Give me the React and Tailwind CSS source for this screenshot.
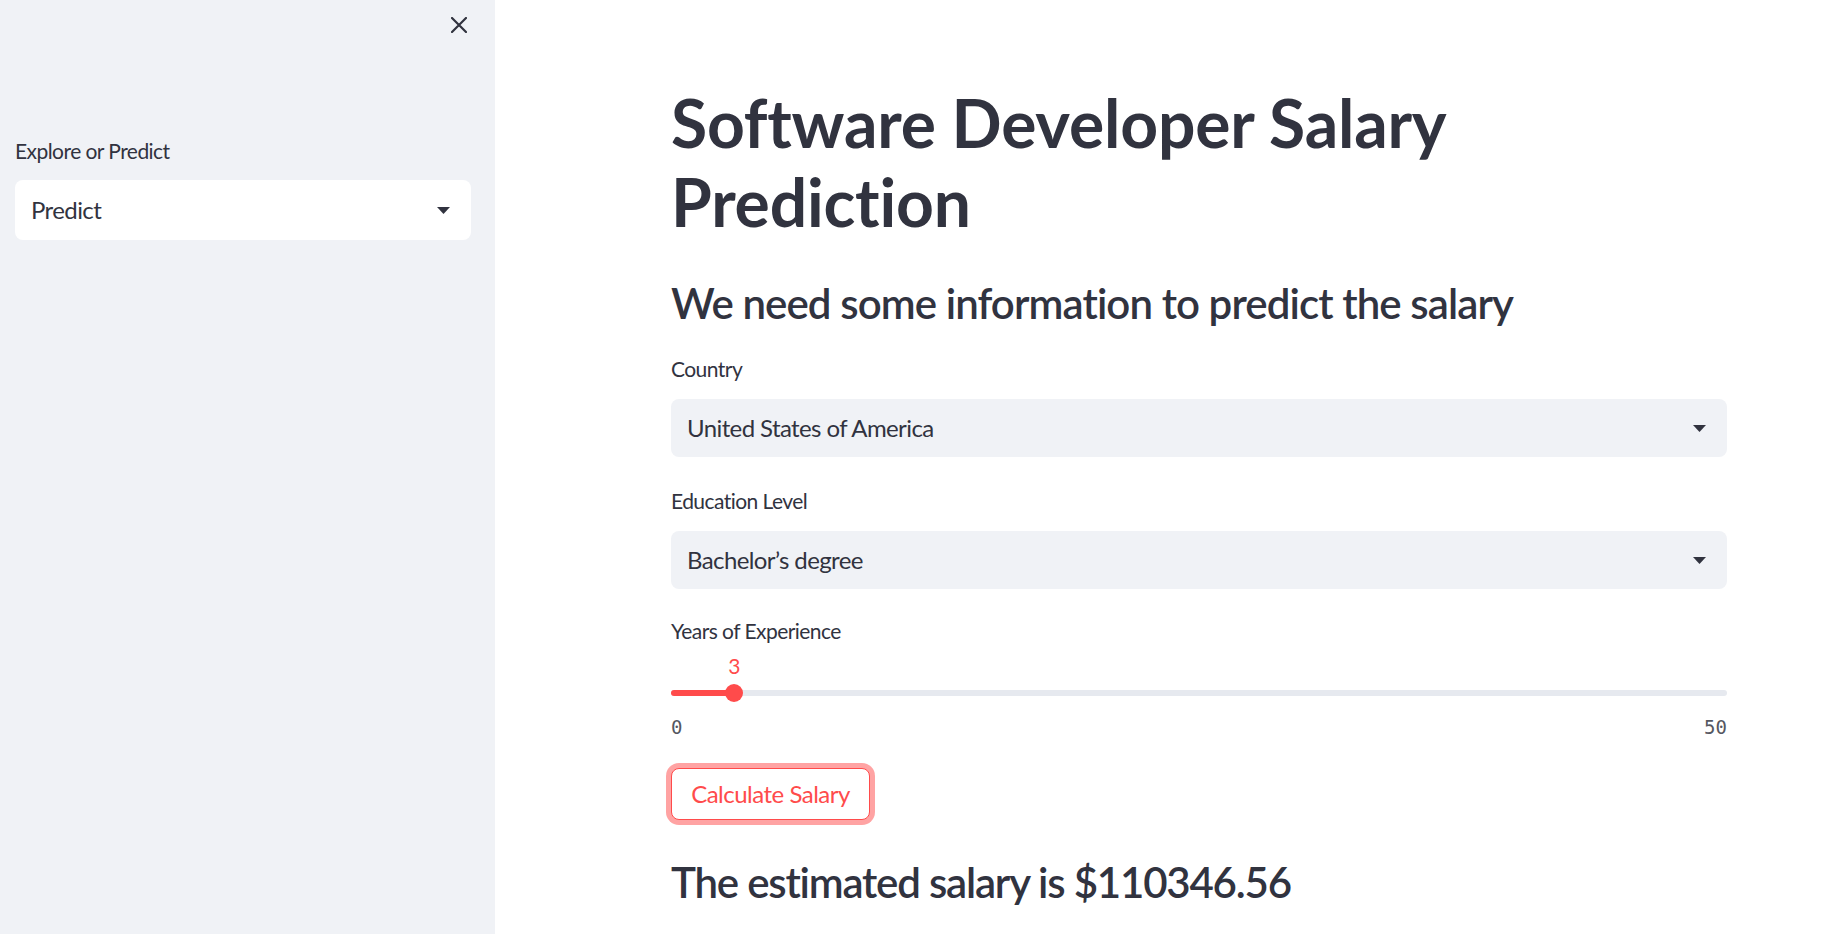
const font = { fontFamily: 'Lato, "Noto Sans", sans-serif' }

function Caret() {
  return (
    <svg width="13" height="7" viewBox="0 0 13 7" className="shrink-0">
      <path d="M0 0 L13 0 L6.5 7 Z" fill="#31333f" />
    </svg>
  )
}

function SelectBox({ value, white }) {
  return (
    <div
      className={`rounded-[8px] flex items-center justify-between pl-[16px] pr-[21px] text-[24px] tracking-[-0.6px] text-[#31333f] ${white ? 'bg-white h-[60px]' : 'bg-[#f0f2f6] h-[58px]'}`}
    >
      <span>{value}</span>
      <Caret />
    </div>
  )
}

function Label({ children }) {
  return <div className="text-[21px] leading-[32px] tracking-[-0.55px] text-[#31333f]">{children}</div>
}

export default function App() {
  const years = 3
  const pct = (years / 50) * 100

  return (
    <div className="flex w-full min-h-[934px] bg-white" style={font}>
      <aside className="w-[495px] shrink-0 bg-[#f0f2f6] min-h-[934px] px-[15px] pr-[24px]">
        <div className="flex justify-end pt-[17px] pr-[4px]">
          <svg width="16" height="16" viewBox="0 0 16 16">
            <path d="M1 1 L15 15 M15 1 L1 15" stroke="#31333f" strokeWidth="2.2" strokeLinecap="round" />
          </svg>
        </div>
        <div className="mt-[102px]">
          <Label>Explore or Predict</Label>
          <div className="mt-[13px]">
            <SelectBox value="Predict" white />
          </div>
        </div>
      </aside>

      <main className="flex-1 pl-[176px]">
        <div className="w-[1056px] pt-[83px]">
          <h1 className="text-[66px] leading-[79px] font-bold tracking-[-0.2px] text-[#31333f]">
            Software Developer Salary Prediction
          </h1>
          <h3 className="mt-[37px] text-[42px] leading-[50px] font-semibold tracking-[-0.9px] text-[#31333f]">
            We need some information to predict the salary
          </h3>

          <div className="mt-[25px]">
            <Label>Country</Label>
            <div className="mt-[14px]">
              <SelectBox value="United States of America" />
            </div>
          </div>

          <div className="mt-[28px]">
            <Label>Education Level</Label>
            <div className="mt-[14px]">
              <SelectBox value="Bachelor’s degree" />
            </div>
          </div>

          <div className="mt-[26px]">
            <Label>Years of Experience</Label>
            <div className="relative h-[62px] mt-[6px]">
              <div className="absolute top-[37px] left-0 right-0 h-[6px] rounded-full bg-[#e6e9ef]" />
              <div
                className="absolute top-[37px] left-0 h-[6px] rounded-full bg-[#ff4b4b]"
                style={{ width: `${pct}%` }}
              />
              <div
                className="absolute top-[31px] w-[18px] h-[18px] -ml-[9px] rounded-full bg-[#ff4b4b]"
                style={{ left: `${pct}%` }}
              />
              <div
                className="absolute top-[0px] -translate-x-1/2 text-[21px] leading-[26px] text-[#ff4b4b]"
                style={{ left: `${pct}%` }}
              >
                {years}
              </div>
            </div>
            <div
              className="flex justify-between text-[19px] leading-[24px] text-[#555761]"
              style={{ fontFamily: '"DejaVu Sans Mono", monospace' }}
            >
              <span>0</span>
              <span>50</span>
            </div>
          </div>

          <button className="mt-[29px] h-[52px] w-[199px] rounded-[8px] border-[1.5px] border-[#ff4b4b] bg-white text-[24px] tracking-[-0.5px] text-[#ff4b4b] ring-[5px] ring-[#ffa3a3] flex items-center justify-center">
            Calculate Salary
          </button>

          <h3 className="mt-[37px] text-[42px] leading-[50px] font-semibold tracking-[-1.2px] text-[#31333f]">
            The estimated salary is $110346.56
          </h3>
        </div>
      </main>
    </div>
  )
}
